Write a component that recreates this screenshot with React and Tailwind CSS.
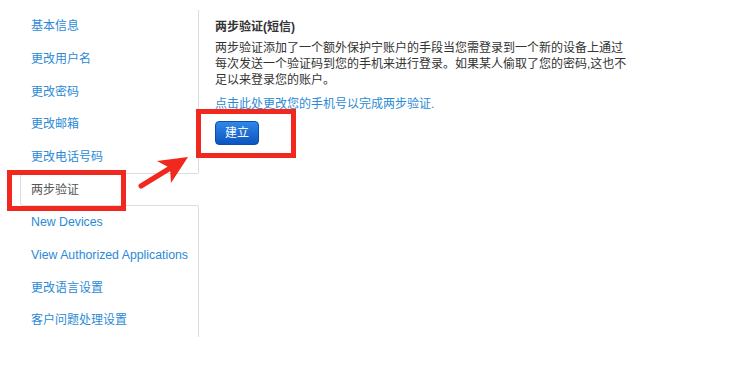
import React from "react";

const navItems = [
  "基本信息",
  "更改用户名",
  "更改密码",
  "更改邮箱",
  "更改电话号码",
  "两步验证",
  "New Devices",
  "View Authorized Applications",
  "更改语言设置",
  "客户问题处理设置",
];

const ACTIVE = "两步验证";

function SideNav() {
  return (
    <ul className="ml-[20px] mt-[10px] w-[179px] shrink-0">
      {navItems.map((item) =>
        item === ACTIVE ? (
          <li
            key={item}
            className="h-[32.67px] flex items-center pl-[10px] border border-[#dddddd] border-r-white rounded-l-[4px] bg-white text-[#555555]"
          >
            {item}
          </li>
        ) : (
          <li
            key={item}
            className={
              /^[A-Za-z]/.test(item)
                ? "h-[32.67px] flex items-center pl-[11px] border-r border-[#dddddd] text-[#2b8ad6] text-[12.3px]"
                : "h-[32.67px] flex items-center pl-[11px] border-r border-[#dddddd] text-[#2b8ad6]"
            }
          >
            {item}
          </li>
        )
      )}
    </ul>
  );
}

function TwoStepPanel() {
  return (
    <div className="pl-[16px] pt-[19px] text-[#333333]">
      <h3 className="font-bold leading-[16px]">两步验证(短信)</h3>
      <p className="mt-[5px] w-[412px] leading-[16px]">
        两步验证添加了一个额外保护宁账户的手段当您需登录到一个新的设备上通过每次发送一个验证码到您的手机来进行登录。如果某人偷取了您的密码,这也不足以来登录您的账户。
      </p>
      <p className="mt-[8px] leading-[16px] text-[#2b8ad6]">点击此处更改您的手机号以完成两步验证.</p>
      <button className="mt-[9px] w-[44px] h-[24px] rounded-[4px] border border-[#0a4fae] bg-linear-to-b from-[#3088e8] to-[#0b55c0] text-white text-[12px] leading-none">
        建立
      </button>
    </div>
  );
}

export default function App() {
  return (
    <div className="relative w-[750px] h-[375px] bg-white flex text-[12px] font-['Liberation_Sans','Noto_Sans_CJK_SC',sans-serif]">
      <SideNav />
      <TwoStepPanel />

      {/* annotation marks */}
      <div className="absolute left-[7px] top-[170px] w-[119px] h-[41px] border-[5px] border-[#f0281e]" />
      <div className="absolute left-[196px] top-[109px] w-[100px] h-[49px] border-[5px] border-[#f0281e]" />
      <svg className="absolute left-0 top-0" width="750" height="375" viewBox="0 0 750 375">
        <line x1="141" y1="186" x2="172" y2="167" stroke="#f0281e" strokeWidth="5" strokeLinecap="round" />
        <polygon points="188,157 157,161 170,168 171,183" fill="#f0281e" />
      </svg>
    </div>
  );
}
